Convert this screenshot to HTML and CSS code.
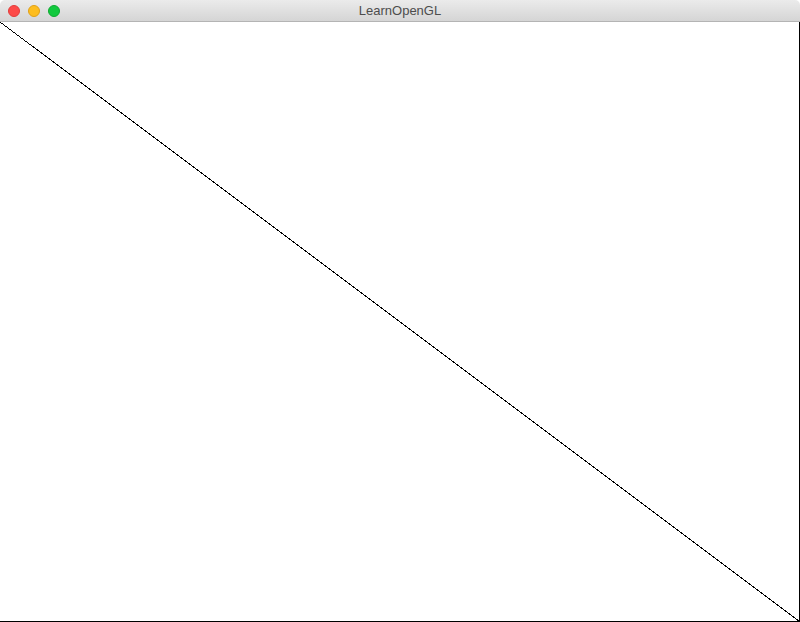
FILE: index.html
```html
<!DOCTYPE html>
<html>
<head>
<meta charset="utf-8">
<link rel="stylesheet" href="styles.css">
</head>
<body>
<div class="window">
  <div class="titlebar">
    <div class="lights">
      <span class="light red"></span>
      <span class="light yellow"></span>
      <span class="light green"></span>
    </div>
    <div class="title">LearnOpenGL</div>
  </div>
  <div class="canvas">
    <svg class="diag" viewBox="0 0 799 599" preserveAspectRatio="none" width="799" height="599">
      <line x1="0" y1="0" x2="799" y2="599" stroke="#000" stroke-width="1" shape-rendering="crispEdges"/>
    </svg>
  </div>
</div>
</body>
</html>
```
FILE: styles.css
```css
html, body {
  margin: 0;
  padding: 0;
  background: #ffffff;
}
.window {
  width: 800px;
  height: 622px;
  display: flex;
  flex-direction: column;
  overflow: hidden;
}
.titlebar {
  height: 22px;
  flex: 0 0 22px;
  box-sizing: border-box;
  border-bottom: 1px solid #b4b4b4;
  background: linear-gradient(#ebebeb, #d5d5d5);
  border-radius: 5px 5px 0 0;
  position: relative;
  display: flex;
  align-items: center;
  justify-content: center;
}
.lights {
  position: absolute;
  left: 8px;
  top: 5px;
  display: flex;
  gap: 8px;
}
.light {
  width: 12px;
  height: 12px;
  border-radius: 50%;
  box-sizing: border-box;
}
.red { background: #fd4a48; border: 1px solid #e23c3a; }
.yellow { background: #fdbd1f; border: 1px solid #e0a016; }
.green { background: #12c93e; border: 1px solid #0eaa30; }
.title {
  font-family: "Liberation Sans", Arial, sans-serif;
  font-size: 13px;
  color: #4d4d4d;
  line-height: 21px;
}
.canvas {
  flex: 1;
  background: #fff;
  border-right: 1px solid #000;
  border-bottom: 1px solid #000;
  display: flex;
}
.diag {
  display: block;
}
```
